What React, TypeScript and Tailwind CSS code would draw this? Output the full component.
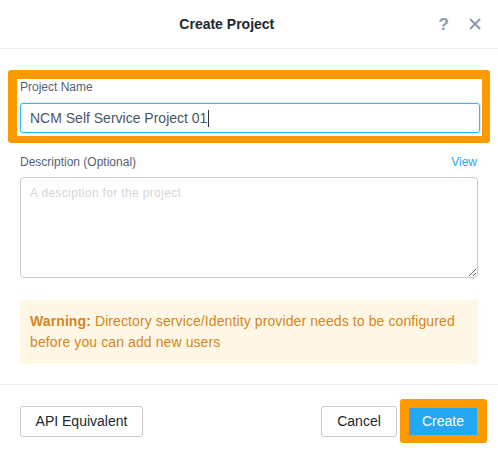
export default function App() {
  return (
    <div className="w-[498px] h-[456px] bg-white font-['Liberation_Sans',Arial,sans-serif] flex flex-col">
      {/* Header */}
      <div className="h-[49px] flex items-center border-b border-[#eceef1] shrink-0">
        <div className="flex-1 pl-[15px] text-center text-[14px] font-bold text-[#22272e]">Create Project</div>
        <div className="flex items-center gap-[20px] pr-[17px]">
          <span className="text-[17px] font-bold text-[#8c9aab] leading-none">?</span>
          <svg width="12" height="12" viewBox="0 0 12 12" className="text-[#8c9aab]">
            <path d="M1.5 1.5 L10.5 10.5 M10.5 1.5 L1.5 10.5" stroke="currentColor" strokeWidth="2" strokeLinecap="round" />
          </svg>
        </div>
      </div>

      {/* Body */}
      <div className="flex flex-col px-[20px]">
        <div className="-mx-[12px] mt-[21px] border-t-[9px] border-l-[9px] border-r-[8px] border-b-[7px] border-[#ff9900] rounded-[3px] pl-[3px] pr-[2px] pb-[3px]">
          <div className="text-[12px] leading-[16px] text-[#566273]">Project Name</div>
          <div className="mt-[8px] h-[30px] rounded-[3px] border border-[#30b9ef] shadow-[0_0_0_1px_#dcf1fb] flex items-center pl-[9px] text-[14px] text-[#4a5564]">
            NCM Self Service Project 01
            <span className="inline-block w-px h-[17px] bg-[#333] ml-[1px]" />
          </div>
        </div>

        <div className="mt-[11px] flex justify-between text-[12px] leading-[16px]">
          <span className="text-[#566273]">Description (Optional)</span>
          <span className="text-[#2fa4f0] pr-[1px]">View</span>
        </div>
        <textarea
          className="mt-[7px] h-[101px] w-full rounded-[4px] border border-[#c8ccd1] px-[9px] py-[7px] text-[12px] leading-[16px] tracking-[0.35px] text-[#4a5564] placeholder:text-[#d3d6da] outline-none resize-y"
          placeholder="A desciption for the project"
        />

        <div className="mt-[22px] rounded-[4px] bg-[#fff7e5] px-[10px] py-[11px] text-[14px] leading-[21px] tracking-[0.1px] text-[#d3861b]">
          <span className="font-bold">Warning:</span> Directory service/Identity provider needs to be configured before you can add new users
        </div>
      </div>

      {/* Footer */}
      <div className="mt-[20px] border-t border-[#eceef1] pt-[14px] pl-[20px] pr-[11px] flex items-center">
        <button className="h-[31px] w-[123px] rounded-[3px] border border-[#c5c9d0] bg-white text-[14px] text-[#22272e]">
          API Equivalent
        </button>
        <div className="flex-1" />
        <button className="h-[31px] w-[76px] rounded-[3px] border border-[#c5c9d0] bg-white text-[14px] text-[#22272e]">
          Cancel
        </button>
        <div className="ml-[3px] border-t-[9px] border-l-[9px] border-r-[10px] border-b-[8px] border-[#ff9900] rounded-[3px]">
          <button className="h-[27px] w-[68px] bg-[#25a8f4] text-[14px] text-white block">Create</button>
        </div>
      </div>
    </div>
  )
}
